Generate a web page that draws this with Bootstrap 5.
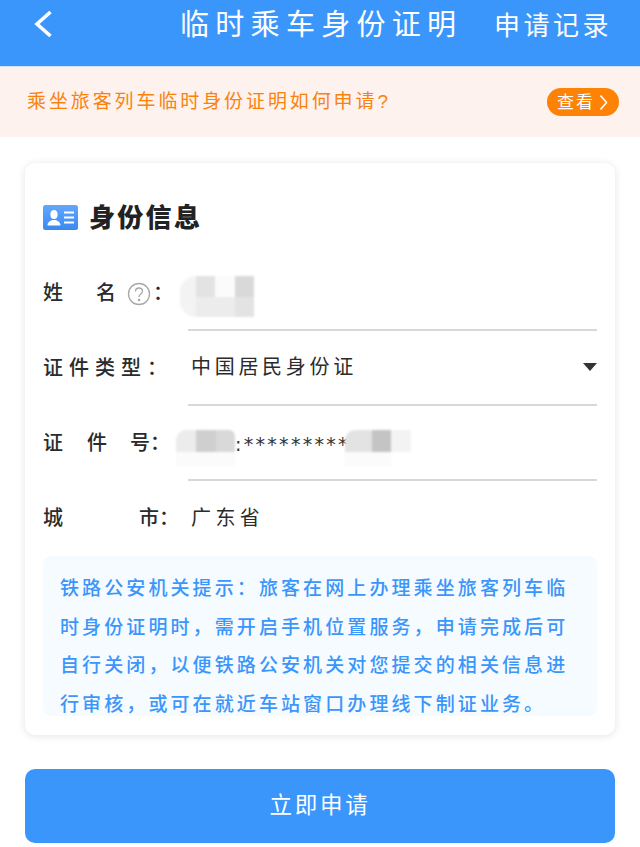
<!DOCTYPE html>
<html lang="zh-CN">
<head>
<meta charset="utf-8">
<meta name="viewport" content="width=device-width, initial-scale=1">
<title>临时乘车身份证明</title>
<link href="https://cdn.jsdelivr.net/npm/bootstrap@5.3.0/dist/css/bootstrap.min.css" rel="stylesheet">
<style>
html,body{height:847px;overflow:hidden}
body{font-family:"Liberation Sans","Noto Sans CJK SC",sans-serif;background:#fff;color:#2b2b2b}
.app-top{height:67px;background:#3b96fb;border-bottom:1px solid #cfe4fb;color:#fff;padding:0 0 15px 33px}
.back-ic{width:20px;height:28px;margin-top:-4px;margin-right:128px}
.top-title{font-size:29px;letter-spacing:6.300px;line-height:1;width:314px;white-space:nowrap;margin-left:-1px}
.top-link{font-size:26px;letter-spacing:3.500px;line-height:1;white-space:nowrap}
.promo{height:70px;background:#fdf2ee;padding:0 21px 0 27px;color:#f9820f}
.promo-text{font-size:19px;letter-spacing:2.900px;white-space:nowrap}
.promo-btn{width:72px;height:28px;border-radius:14px;background:#fd8206;color:#fff;font-size:17px;letter-spacing:2px;line-height:1;border:0;padding:0 0 0 10px}
.promo-btn svg{width:9px;height:17px;margin-left:4px}
.info-panel{margin:26px 25px 0;height:572px;border-radius:10px;box-shadow:0 1px 9px rgba(0,0,0,.11);padding:42px 18px 18px}
.panel-head{height:51px}
.id-ic{width:35px;height:25px;margin-right:11px}
.panel-title{font-size:26px;font-weight:900;letter-spacing:2.300px;color:#222;line-height:1}
.f-row{height:75px;font-size:20px;color:#2b2b2b}
.f-label{width:145px;flex:none;display:flex;align-items:center;height:100%;font-weight:500;white-space:nowrap;padding-bottom:2px}
.sp-type{letter-spacing:6px}
.gap-name{margin-left:33px}
.gap-jian{margin-left:24px}
.gap-hao{margin-left:23px}
.gap-city{margin-left:76px}
.f-val{flex:1 1 auto;height:100%;border-bottom:2px solid #d8d8d8;display:flex;align-items:center;letter-spacing:3.700px;white-space:nowrap}
.f-val.has-text{padding-left:3px;padding-bottom:1px}
.f-val.plain{border:0;padding-left:3px;letter-spacing:4.400px;padding-bottom:2px}
.help-ic{width:24px;height:24px;margin:3px 2px 0 11px;flex:none}
.caret-ic{width:0;height:0;border:7px solid transparent;border-top:8px solid #333;border-bottom:0;margin-left:auto}
.mosaic{display:grid;filter:blur(1.200px);flex:none}
.mosaic i{display:block}
.mz-name{grid-template-columns:16px 19px 20px 19px;grid-template-rows:21px 20px;margin-left:-8px;margin-top:8px;border-radius:16px 0 0 16px;overflow:hidden}
.mz-a{grid-template-columns:20px 20px 19px;grid-template-rows:22px 14px;margin-left:-12px;margin-top:11px;border-radius:10px 6px 0 0;overflow:hidden}
.mz-b{grid-template-columns:27px 19px 20px;grid-template-rows:22px 14px;margin-left:-5px;margin-top:11px;border-radius:10px 0 0 0;overflow:hidden}
.stars{font-size:19px;letter-spacing:2.300px;color:#333;width:115px;overflow:hidden;line-height:23px;padding-top:4px;font-family:"DejaVu Sans",sans-serif}
.notice{height:160px;border-radius:8px;background:#f6fbff;color:#3b96fb;padding:14px 17px;font-size:19px;line-height:38.600px;letter-spacing:3.100px;font-weight:500}
.notice span{display:block;white-space:nowrap}
.go-btn{display:block;margin:34px 25px 0;width:590px;height:74px;border-radius:10px;background:#3b96fb;border:0;color:#fff;font-size:22.500px;letter-spacing:2.800px;padding:0}
.c0{background:#fbfbfb}.c1{background:#e3e3e3}.c2{background:#f3f3f3}.c3{background:#d9d9d9}.c4{background:#cfcfcf}.c5{background:#ececec}.c6{background:#c4c4c4}
</style>
</head>
<body>
<header class="app-top d-flex align-items-center">
  <svg class="back-ic flex-none" viewBox="0 0 20 28" fill="none" stroke="#fff" stroke-width="3.6"><path d="M17.5 2 4 14l13.5 12"/></svg>
  <div class="top-title">临时乘车身份证明</div>
  <div class="top-link">申请记录</div>
</header>
<section class="promo d-flex align-items-center justify-content-between">
  <div class="promo-text">乘坐旅客列车临时身份证明如何申请?</div>
  <button type="button" class="promo-btn btn d-flex align-items-center">查看<svg viewBox="0 0 9 17" fill="none" stroke="#fff" stroke-width="1.6"><path d="M1.500 1.500 7.500 8.500l-6 7"/></svg></button>
</section>
<main class="info-panel bg-white">
  <div class="panel-head d-flex align-items-start">
    <svg class="id-ic" viewBox="0 0 35 25"><defs><linearGradient id="g" x1="0" y1="0" x2="0" y2="1"><stop offset="0" stop-color="#62a8fb"/><stop offset="1" stop-color="#3a88f2"/></linearGradient></defs><rect width="35" height="25" rx="2.5" fill="url(#g)"/><ellipse cx="11" cy="9.500" rx="3.600" ry="4.500" fill="#fff"/><path d="M4.500 20.500c0-3.500 3-4.500 4.500-5.500h4c1.500 1 4.500 2 4.500 5.500z" fill="#fff"/><path d="M21 7.500h10M21 12.500h10M21 17.500h10" stroke="#fff" stroke-width="1.800"/></svg>
    <h1 class="panel-title m-0">身份信息</h1>
  </div>
  <div class="f-row d-flex align-items-center">
    <div class="f-label"><span>姓</span><span class="gap-name">名</span><svg class="help-ic" viewBox="0 0 24 24" fill="none" stroke="#a8a8a8" stroke-width="1.300"><circle cx="12" cy="12" r="10.500"/><path d="M8.500 9.500c0-2.200 1.600-3.500 3.500-3.500s3.500 1.300 3.500 3.200c0 2.800-3.500 2.800-3.500 5.800"/><circle cx="12" cy="18" r=".7" fill="#a8a8a8"/></svg><span>：</span></div>
    <div class="f-val"><div class="mosaic mz-name"><i class="c2"></i><i class="c1"></i><i class="c0"></i><i class="c3"></i><i class="c2"></i><i class="c5"></i><i class="c5"></i><i class="c1"></i></div></div>
  </div>
  <div class="f-row d-flex align-items-center">
    <div class="f-label"><span class="sp-type">证件类型：</span></div>
    <div class="f-val has-text">中国居民身份证<span class="caret-ic"></span></div>
  </div>
  <div class="f-row d-flex align-items-center">
    <div class="f-label"><span>证</span><span class="gap-jian">件</span><span class="gap-hao">号：</span></div>
    <div class="f-val"><div class="mosaic mz-a"><i class="c5"></i><i class="c4"></i><i class="c3"></i><i class="c0"></i><i class="c0"></i><i class="c0"></i></div><div class="stars">:*********</div><div class="mosaic mz-b"><i class="c1"></i><i class="c6"></i><i class="c2"></i><i class="c0"></i><i class="c0"></i><i class="bg-white"></i></div></div>
  </div>
  <div class="f-row d-flex align-items-center">
    <div class="f-label"><span>城</span><span class="gap-city">市：</span></div>
    <div class="f-val plain">广东省</div>
  </div>
  <aside class="notice"><span>铁路公安机关提示：旅客在网上办理乘坐旅客列车临</span><span>时身份证明时，需开启手机位置服务，申请完成后可</span><span>自行关闭，以便铁路公安机关对您提交的相关信息进</span><span>行审核，或可在就近车站窗口办理线下制证业务。</span></aside>
</main>
<button type="button" class="go-btn btn">立即申请</button>
<script src="https://cdn.jsdelivr.net/npm/bootstrap@5.3.0/dist/js/bootstrap.bundle.min.js"></script>
</body>
</html>
